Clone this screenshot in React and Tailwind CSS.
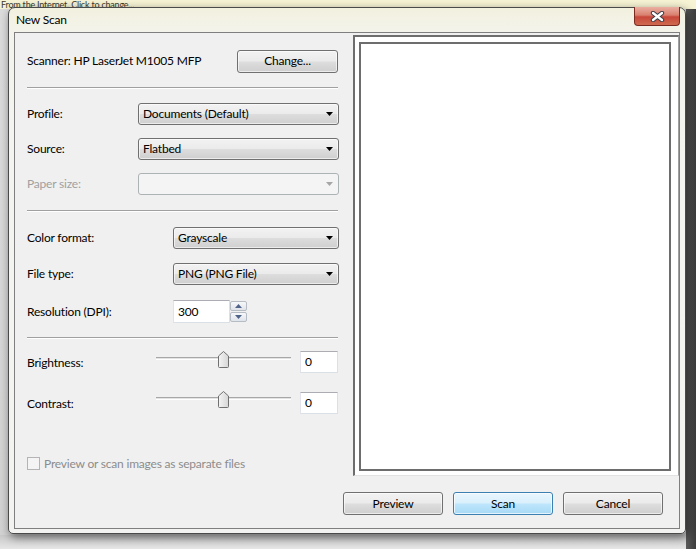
import React from "react";

const btnBg =
  "bg-[linear-gradient(#f2f2f2_0%,#ebebeb_48%,#dddddd_52%,#cfcfcf_100%)]";

function Button({ children, primary, className = "" }) {
  return (
    <div
      className={`flex h-[23px] items-center justify-center rounded-[3px] border text-black ${
        primary
          ? "border-[#3c7fb1] bg-[linear-gradient(#eaf6fd_0%,#d9f0fc_48%,#bee6fd_52%,#a7d9f5_100%)] shadow-[inset_0_0_0_1px_rgba(255,255,255,0.7)]"
          : `border-[#707070] ${btnBg} shadow-[inset_0_0_0_1px_rgba(255,255,255,0.6)]`
      } ${className}`}
    >
      {children}
    </div>
  );
}

function Combo({ value, disabled, className = "" }) {
  return (
    <div
      className={`flex h-[22px] items-center justify-between rounded-[3px] border pl-[4px] pr-[5px] ${
        disabled
          ? "border-[#adb2b5] bg-[#f4f4f4]"
          : `border-[#707070] ${btnBg} text-black shadow-[inset_0_0_0_1px_rgba(255,255,255,0.6)]`
      } ${className}`}
    >
      <span>{value}</span>
      <svg width="7" height="4" viewBox="0 0 7 4">
        <path d="M0 0h7L3.5 4z" fill={disabled ? "#a6a6a6" : "#000"} />
      </svg>
    </div>
  );
}

function Field({ value, className = "" }) {
  return (
    <div
      className={`flex h-[22px] items-center border border-[#dbdfe6] border-t-[#abadb3] border-l-[#e2e3ea] bg-white pl-[4px] text-black ${className}`}
    >
      {value}
    </div>
  );
}

function Slider() {
  return (
    <div className="relative h-[17px] w-[135px]">
      <div className="absolute left-0 right-0 top-[6px] h-[3px] border-t border-[#a7a7a7] border-b border-b-white bg-[#e3e3e3]" />
      <svg
        className="absolute left-[62px] top-0"
        width="11"
        height="17"
        viewBox="0 0 11 17"
      >
        <defs>
          <linearGradient id="th" x1="0" x2="1" y1="0" y2="0">
            <stop offset="0" stopColor="#f4f4f4" />
            <stop offset="1" stopColor="#d6d6d6" />
          </linearGradient>
        </defs>
        <path
          d="M0.5 5L5.5 0.5L10.5 5V15.5Q10.5 16.5 9.5 16.5H1.5Q0.5 16.5 0.5 15.5Z"
          fill="url(#th)"
          stroke="#707070"
        />
      </svg>
    </div>
  );
}

function Separator({ className = "" }) {
  return (
    <div
      className={`h-[2px] w-[311px] border-t border-[#a0a0a0] border-b border-b-white ${className}`}
    />
  );
}

function SpinArrow({ up }) {
  return (
    <div className="flex h-[10px] items-center justify-center rounded-[2px] border border-[#b6bcc4] bg-[linear-gradient(#f7f8f9,#dfe4ea)]">
      <svg width="7" height="4" viewBox="0 0 7 4">
        <path d={up ? "M0 4h7L3.5 0z" : "M0 0h7L3.5 4z"} fill="#50648a" />
      </svg>
    </div>
  );
}

export default function App() {
  return (
    <div className="relative h-[549px] w-[696px] overflow-hidden bg-[linear-gradient(#dcdcdc,#d2d2d2)] font-['Lato','Noto_Sans',sans-serif] text-[12px] tracking-[-0.2px]">
      {/* desktop behind the dialog */}
      <div className="absolute left-0 right-0 top-0 h-[9px] overflow-hidden bg-[#f7f4d5]">
        <div className="whitespace-nowrap pl-[1px] text-[9px] leading-[9px] text-[#3a3a2a]">
          From the Internet. Click to change...
        </div>
      </div>
      <div className="absolute bottom-0 right-0 top-[9px] w-[10px] bg-[linear-gradient(90deg,#5a5a5a,#3c3c3c)]" />
      <div className="absolute bottom-0 left-0 right-[10px] h-[14px] bg-[linear-gradient(#c9c9c9,#e6e6e6)]" />

      {/* dialog window */}
      <div className="absolute left-[8px] top-[7px] flex h-[527px] w-[678px] flex-col rounded-t-[7px] rounded-b-[5px] border border-[#4a4a4a] bg-[linear-gradient(#f2f1df_0%,#f4f4ef_6%,#f3f3f1_100%)] px-[5px] pb-[4px] pt-0 shadow-[2px_3px_10px_rgba(0,0,0,0.55)]">
        {/* title bar */}
        <div className="relative flex h-[24px] items-center pl-[2px]">
          <span className="text-[12px] text-black">New Scan</span>
          <div className="absolute -top-px right-0 flex h-[19px] w-[46px] items-center justify-center rounded-b-[4px] border border-t-0 border-[#7b2a20] bg-[linear-gradient(#eab0a2_0%,#d9806f_45%,#c8473a_55%,#cf6a4f_100%)]">
            <svg width="15" height="11" viewBox="0 0 15 11">
              <path
                d="M3 2L12 9M12 2L3 9"
                stroke="#3b3b45"
                strokeWidth="4.4"
                strokeLinecap="round"
              />
              <path
                d="M3 2L12 9M12 2L3 9"
                stroke="#ffffff"
                strokeWidth="2.4"
                strokeLinecap="round"
              />
            </svg>
          </div>
        </div>

        {/* client area */}
        <div className="flex flex-1 flex-col border border-[#7f7f7f] bg-[#f0f0f0]">
          <div className="flex">
            {/* settings column */}
            <div className="flex w-[338px] flex-col pl-[12px]">
              <div className="mt-[17px] flex h-[22px] w-[311px] items-center justify-between">
                <span>Scanner: HP LaserJet M1005 MFP</span>
                <Button className="w-[101px]">Change...</Button>
              </div>
              <Separator className="mt-[15px]" />

              <div className="mt-[14px] flex w-[312px] items-center">
                <span className="w-[111px]">Profile:</span>
                <Combo value="Documents (Default)" className="flex-1" />
              </div>
              <div className="mt-[13px] flex w-[312px] items-center">
                <span className="w-[111px]">Source:</span>
                <Combo value="Flatbed" className="flex-1" />
              </div>
              <div className="mt-[13px] flex w-[312px] items-center">
                <span className="w-[111px] text-[#a0a0a0]">Paper size:</span>
                <Combo value="" disabled className="flex-1" />
              </div>
              <Separator className="mt-[15px]" />

              <div className="mt-[15px] flex w-[312px] items-center">
                <span className="w-[146px]">Color format:</span>
                <Combo value="Grayscale" className="flex-1" />
              </div>
              <div className="mt-[14px] flex w-[312px] items-center">
                <span className="w-[146px]">File type:</span>
                <Combo value="PNG (PNG File)" className="flex-1" />
              </div>
              <div className="mt-[15px] flex h-[23px] w-[312px] items-center">
                <span className="w-[146px]">Resolution (DPI):</span>
                <Field value="300" className="h-[23px] w-[57px]" />
                <div className="flex w-[17px] flex-col gap-px">
                  <SpinArrow up />
                  <SpinArrow />
                </div>
              </div>
              <Separator className="mt-[14px]" />

              <div className="mt-[12px] flex h-[22px] w-[312px] items-start">
                <span className="mt-[2px] w-[129px] leading-[20px]">Brightness:</span>
                <Slider />
                <Field value="0" className="ml-[9px] w-[38px]" />
              </div>
              <div className="mt-[19px] flex h-[22px] w-[312px] items-start">
                <span className="mt-[2px] w-[129px] leading-[20px]">Contrast:</span>
                <div className="-mt-px">
                  <Slider />
                </div>
                <Field value="0" className="ml-[9px] w-[38px]" />
              </div>

              <div className="mt-[43px] flex h-[13px] items-center">
                <div className="h-[13px] w-[13px] border border-[#b4b4b4] bg-[#f4f4f4]" />
                <span className="ml-[4px] text-[#8c8c8c]">
                  Preview or scan images as separate files
                </span>
              </div>
            </div>

            {/* preview pane */}
            <div className="mt-[2px] h-[441px] w-[326px] border-b border-l-2 border-r border-t-2 border-b-[#e2e2e2] border-l-[#6d6d6d] border-r-[#a0a0a0] border-t-[#6d6d6d] bg-white pb-[4px] pl-[4px] pr-[7px] pt-[5px]">
              <div className="h-full w-full border-2 border-[#6d6d6d] bg-white" />
            </div>
          </div>

          {/* action buttons */}
          <div className="mt-[16px] flex justify-end gap-[10px] pr-[16px]">
            <Button className="w-[100px]">Preview</Button>
            <Button primary className="w-[100px]">
              Scan
            </Button>
            <Button className="w-[100px]">Cancel</Button>
          </div>
        </div>
      </div>
    </div>
  );
}
